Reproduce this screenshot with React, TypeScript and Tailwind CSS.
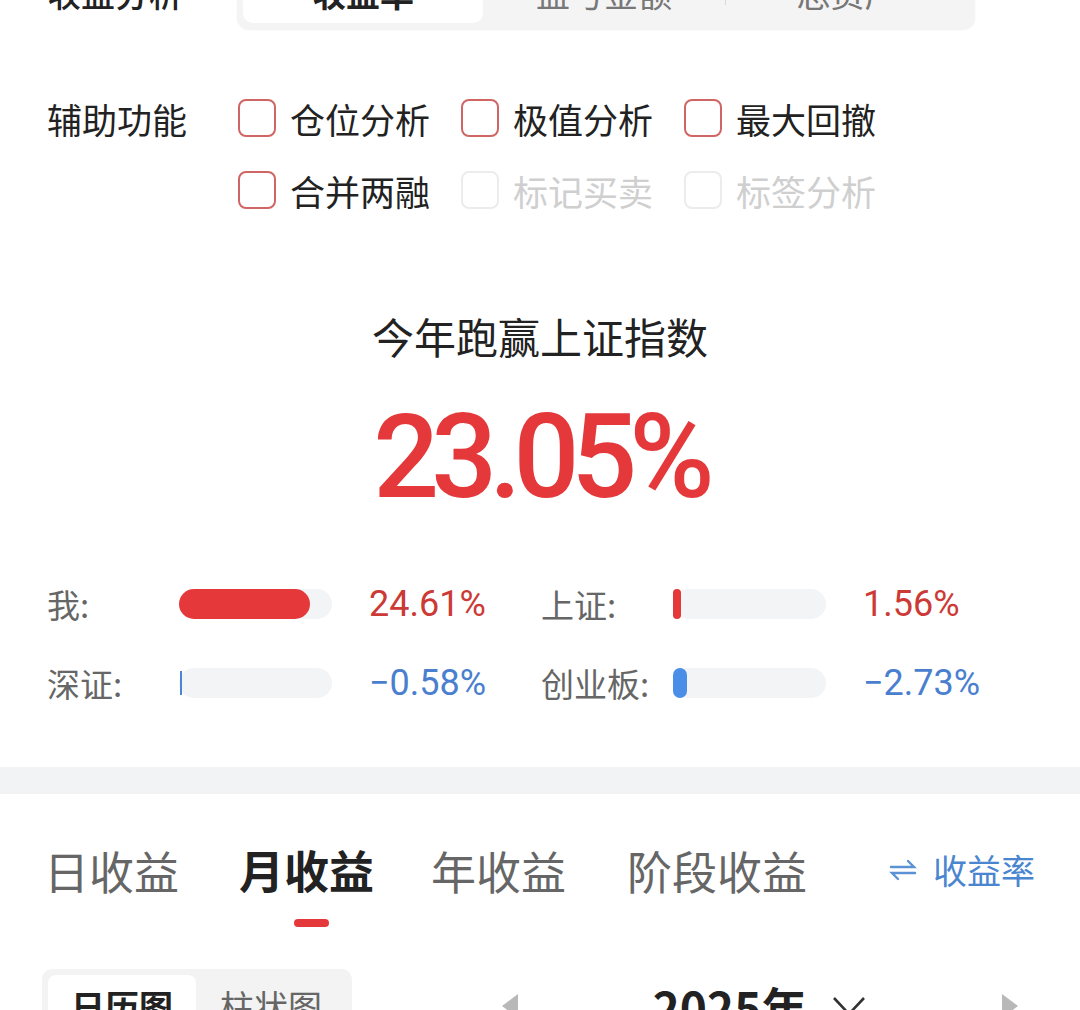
import React from "react";

const font = { fontFamily: '"Noto Sans CJK SC", "Noto Sans", sans-serif' };
const numFont = { fontFamily: 'Roboto, "Noto Sans", sans-serif' };

function Check({ label, disabled }: { label: string; disabled?: boolean }) {
  return (
    <div className="flex items-center w-[223px]">
      <div
        className={
          "w-[38px] h-[38px] rounded-[8px] border-2 shrink-0 " +
          (disabled ? "border-[#ececec]" : "border-[#d06664]")
        }
      />
      <span
        className={
          "ml-[14px] text-[35px] leading-none " +
          (disabled ? "text-[#cfcfcf]" : "text-[#222222]")
        }
      >
        {label}
      </span>
    </div>
  );
}

function Stat({
  label,
  fill,
  color,
  value,
  valueColor,
  thin,
}: {
  label: string;
  fill: number;
  color: string;
  value: string;
  valueColor: string;
  thin?: boolean;
}) {
  return (
    <div className="flex items-center h-[40px]">
      <span className="w-[132px] text-[33px] text-[#666666] leading-none">{label}</span>
      <div className="w-[153px] h-[30px] rounded-full bg-[#f3f4f5] relative">
        {thin ? (
          <div className="absolute left-[1px] top-[3px] h-[24px] w-[2px]" style={{ background: color }} />
        ) : (
          <div className="absolute left-0 top-0 h-full rounded-full" style={{ width: fill, background: color }} />
        )}
      </div>
      <span className="ml-[37px] text-[36px] leading-none" style={{ ...numFont, color: valueColor }}>
        {value}
      </span>
    </div>
  );
}

export default function App() {
  return (
    <div className="w-[1080px] h-[1010px] overflow-hidden bg-white relative" style={font}>
      {/* top segmented */}
      <div className="flex items-center mt-[-44px] pl-[47px] h-[73px]">
        <span className="w-[190px] text-[34px] text-[#222222] font-medium leading-none">收益分析</span>
        <div className="w-[738px] h-[73px] rounded-[12px] bg-[#f4f4f4] p-[6px] flex items-stretch shadow-[0_1px_2px_rgba(0,0,0,0.06)]">
          <div className="w-[240px] bg-white rounded-[10px] flex items-center justify-center text-[34px] font-bold text-[#222222]">
            收益率
          </div>
          <div className="w-[242px] flex items-center justify-center text-[34px] text-[#777777]">盈亏金额</div>
          <div className="w-px my-[18px] bg-[#d8d8d8]" />
          <div className="flex-1 flex items-center justify-center text-[34px] text-[#777777]">总资产</div>
        </div>
      </div>

      {/* 辅助功能 */}
      <div className="flex pl-[47px] mt-[64px]">
        <div className="w-[191px] h-[50px] flex items-center text-[35px] text-[#222222] leading-none">辅助功能</div>
        <div className="flex flex-col gap-[22px]">
          <div className="flex h-[50px] items-center">
            <Check label="仓位分析" />
            <Check label="极值分析" />
            <Check label="最大回撤" />
          </div>
          <div className="flex h-[50px] items-center">
            <Check label="合并两融" />
            <Check label="标记买卖" disabled />
            <Check label="标签分析" disabled />
          </div>
        </div>
      </div>

      {/* headline */}
      <div className="mt-[99px] text-center text-[42px] leading-[44px] text-[#222222]">今年跑赢上证指数</div>
      <div
        className="mt-[44px] text-center text-[116px] leading-[110px] font-medium text-[#e5383a] tracking-[-8px]"
        style={numFont}
      >
        23.05%
      </div>

      {/* stats */}
      <div className="mt-[72px] pl-[47px] flex flex-col gap-[39px]">
        <div className="flex">
          <div className="w-[494px]">
            <Stat label="我:" fill={131} color="#e5383a" value="24.61%" valueColor="#cc3a36" />
          </div>
          <Stat label="上证:" fill={8} color="#e5383a" value="1.56%" valueColor="#cc3a36" />
        </div>
        <div className="flex">
          <div className="w-[494px]">
            <Stat label="深证:" fill={2} color="#4a86d8" value="−0.58%" valueColor="#4a7fd0" thin />
          </div>
          <Stat label="创业板:" fill={14} color="#4a8ee8" value="−2.73%" valueColor="#4a7fd0" />
        </div>
      </div>

      {/* gray band */}
      <div className="mt-[64px] h-[27px] bg-[#f2f3f5]" />

      {/* tabs */}
      <div className="mt-[51px] flex items-center pl-[44px] pr-[45px] h-[50px]">
        <span className="text-[45px] leading-none text-[#666666]">日收益</span>
        <div className="ml-[60px] relative">
          <span className="text-[45px] leading-none font-bold text-[#222222]">月收益</span>
          <div className="absolute left-[55px] top-[72px] w-[35px] h-[8px] rounded-full bg-[#e5383a]" />
        </div>
        <span className="ml-[57px] text-[45px] leading-none text-[#666666]">年收益</span>
        <span className="ml-[61px] text-[45px] leading-none text-[#666666]">阶段收益</span>
        <div className="ml-auto flex items-center text-[#4a86d0]">
          <svg width="28" height="22" viewBox="0 0 28 22" fill="none" stroke="#5b92d6" strokeWidth="2.4" strokeLinecap="round">
            <path d="M2 8 H25 L19 2" />
            <path d="M26 14 H3 L9 20" />
          </svg>
          <span className="ml-[16px] text-[34px] leading-none">收益率</span>
        </div>
      </div>

      {/* bottom controls */}
      <div className="mt-[74px] flex items-start pl-[42px]">
        <div className="w-[310px] h-[72px] rounded-[10px] bg-[#f3f3f3] p-[6px] flex">
          <div className="w-[148px] rounded-[8px] bg-white flex items-center justify-center text-[34px] font-bold text-[#222222]">
            日历图
          </div>
          <div className="flex-1 flex items-center justify-center text-[34px] text-[#666666]">柱状图</div>
        </div>
        <div className="ml-[148px] mt-[14px] flex items-center w-[520px]">
          <svg width="20" height="28" viewBox="0 0 20 28">
            <path d="M18 2 L2 14 L18 26 Z" fill="#b8b8b8" />
          </svg>
          <div className="flex-1 flex items-center justify-center">
            <span className="text-[46px] leading-none font-bold text-[#222222]">2025年</span>
            <svg className="ml-[24px]" width="36" height="24" viewBox="0 0 36 24" fill="none" stroke="#333333" strokeWidth="2.6">
              <path d="M3 4 L18 20 L33 4" />
            </svg>
          </div>
          <svg width="20" height="28" viewBox="0 0 20 28">
            <path d="M2 2 L18 14 L2 26 Z" fill="#b8b8b8" />
          </svg>
        </div>
      </div>
    </div>
  );
}
